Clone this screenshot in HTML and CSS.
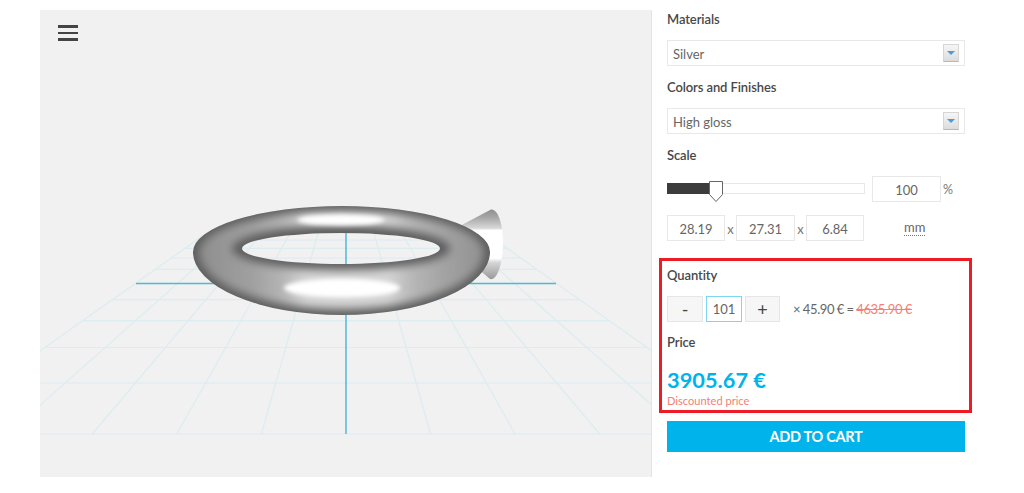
FILE: index.html
```html
<!DOCTYPE html>
<html lang="en">
<head>
<meta charset="utf-8">
<title>3D print configurator</title>
<link rel="stylesheet" href="styles.css">
</head>
<body>
<main class="page">
  <section class="viewer">
    <button class="menu" aria-label="Menu"><span></span><span></span><span></span></button>
    <svg class="scene" viewBox="40 10 611 467" width="611" height="467" aria-hidden="true">
      <defs>
        <clipPath id="ringClip"><path clip-rule="evenodd" d="M193 252A149 46 0 0 1 342 206A148 46 0 0 1 490 252A148 63 0 0 1 342 315A149 63 0 0 1 193 252ZM242 248.500A99 15.500 0 1 0 440 248.500A99 15.500 0 1 0 242 248.500Z"/></clipPath>
        <linearGradient id="tubeGlow" gradientUnits="userSpaceOnUse" x1="193" y1="0" x2="490" y2="0">
          <stop offset="0" stop-color="#8c8c8c"/><stop offset="0.2" stop-color="#a0a0a0"/><stop offset="0.3" stop-color="#b4b4b4"/><stop offset="0.38" stop-color="#d4d4d4"/><stop offset="0.66" stop-color="#d4d4d4"/><stop offset="0.74" stop-color="#b6b6b6"/><stop offset="0.85" stop-color="#a2a2a2"/><stop offset="1" stop-color="#8e8e8e"/>
        </linearGradient>
        <linearGradient id="coneShade" x1="0" y1="0" x2="0" y2="1">
          <stop offset="0" stop-color="#8e8e8e"/><stop offset="0.12" stop-color="#a8a8a8"/><stop offset="0.27" stop-color="#d8d8d8"/><stop offset="0.3" stop-color="#fff"/><stop offset="0.7" stop-color="#fff"/><stop offset="0.76" stop-color="#d6d6d6"/><stop offset="1" stop-color="#999"/>
        </linearGradient>
        <filter id="blurWide" x="-10%" y="-20%" width="120%" height="140%"><feGaussianBlur stdDeviation="4"/></filter>
        <filter id="blurSoft" x="-20%" y="-60%" width="140%" height="220%"><feGaussianBlur stdDeviation="2"/></filter>
      </defs>
      <g class="grid">
        <line x1="40" y1="434" x2="651" y2="434"/><line x1="40" y1="383" x2="651" y2="383"/><line x1="45" y1="347.500" x2="647" y2="347.500"/><line x1="83" y1="320.700" x2="609" y2="320.700"/><line x1="112.500" y1="299.600" x2="579.500" y2="299.600"/><line x1="155" y1="269.400" x2="537" y2="269.400"/><line x1="171" y1="258" x2="521" y2="258"/><line x1="184.500" y1="248.400" x2="507.500" y2="248.400"/><line x1="196.500" y1="240" x2="495.500" y2="240"/><line x1="206.500" y1="233" x2="485.500" y2="233"/>
        <line x1="-77" y1="434" x2="206.500" y2="233"/><line x1="7.600" y1="434" x2="234.400" y2="233"/><line x1="92.200" y1="434" x2="262.300" y2="233"/><line x1="176.800" y1="434" x2="290.200" y2="233"/><line x1="261.400" y1="434" x2="318.100" y2="233"/><line x1="430.600" y1="434" x2="373.900" y2="233"/><line x1="515.200" y1="434" x2="401.800" y2="233"/><line x1="599.800" y1="434" x2="429.700" y2="233"/><line x1="684.400" y1="434" x2="457.600" y2="233"/><line x1="769" y1="434" x2="485.500" y2="233"/>
      </g>
      <g class="axes">
        <line x1="136" y1="283.500" x2="556" y2="283.500"/><line x1="346" y1="233" x2="346" y2="434"/>
      </g>
      <path d="M456 228L491 209.500C497 208 503 222 503 243C503 264 497 281 490 279L470 262Z" fill="url(#coneShade)"/>
      <g clip-path="url(#ringClip)">
        <rect x="190" y="200" width="305" height="120" fill="#5e5e5e"/>
        <path fill-rule="evenodd" fill="url(#tubeGlow)" filter="url(#blurWide)" d="M199 252A143 41 0 0 1 342 211A142 41 0 0 1 484 252A142 57 0 0 1 342 309A143 57 0 0 1 199 252ZM232 249A109 21 0 0 0 450 249A109 24 0 0 0 232 249Z"/>
        <ellipse cx="342" cy="288" rx="58" ry="9.500" fill="#fff" filter="url(#blurSoft)"/>
        <ellipse cx="341" cy="220" rx="44" ry="5.500" fill="#fff" filter="url(#blurSoft)"/>
      </g>
    </svg>
  </section>

  <aside class="panel">
    <h2 class="label">Materials</h2>
    <div class="select"><span class="select-text">Silver</span><i class="arrow"></i></div>
    <h2 class="label">Colors and Finishes</h2>
    <div class="select"><span class="select-text">High gloss</span><i class="arrow"></i></div>
    <h2 class="label">Scale</h2>
    <div class="scale-row">
      <div class="slider"><div class="slider-fill"></div><svg class="thumb" viewBox="0 0 14 21" width="14" height="21" aria-hidden="true"><path d="M.5.5h13v13L7 20.500.5 13.500Z" fill="#fff" stroke="#666"/></svg></div>
      <div class="box box-scale">100</div>
      <span class="unit">%</span>
    </div>
    <div class="dims-row">
      <div class="box box-dim">28.19</div><span class="times">x</span>
      <div class="box box-dim box-mid">27.31</div><span class="times">x</span>
      <div class="box box-dim">6.84</div>
      <span class="mm">mm</span>
    </div>
    <div class="highlight">
      <h2 class="label label-first">Quantity</h2>
      <div class="qty-row">
        <div class="step">-</div>
        <div class="qty">101</div>
        <div class="step step-plus">+</div>
        <p class="sum">× 45.90 € = <s>4635.90 €</s></p>
      </div>
      <h2 class="label label-price">Price</h2>
      <p class="price">3905.67 €</p>
      <p class="discount">Discounted price</p>
    </div>
    <button class="cart">ADD TO CART</button>
  </aside>
</main>
</body>
</html>
```

FILE: styles.css
```css
* { box-sizing: border-box; }
html, body { margin: 0; background: #fff; }
body { font-family: Lato, "Open Sans", sans-serif; color: #555; overflow: hidden; }

.page { display: flex; align-items: flex-start; padding-left: 40px; height: 493px; }

.viewer {
  position: relative;
  flex: none;
  width: 612px;
  height: 467px;
  margin-top: 10px;
  background: #f1f1f1;
  border-right: 1px solid #e4e4e4;
}
.scene { display: block; }
.grid line { stroke: #dcecf1; stroke-width: 1.200; }
.axes line { stroke: #4fb9d3; stroke-width: 1.500; }

.menu {
  position: absolute;
  left: 18px;
  top: 15px;
  display: flex;
  flex-direction: column;
  gap: 4px;
  width: 20px;
  padding: 0;
  border: 0;
  background: none;
}
.menu span { display: block; width: 20px; height: 2.500px; background: #444; }

.panel { flex: none; width: 298px; margin-left: 15px; padding-top: 9px; }

.label {
  height: 20px;
  margin: 0 0 11px;
  font-size: 13px;
  line-height: 20px;
  font-weight: 600;
  letter-spacing: -0.100px;
  color: #484848;
}

.select {
  display: flex;
  align-items: center;
  justify-content: space-between;
  height: 26px;
  margin-bottom: 11px;
  padding: 0 5px;
  border: 1px solid #e8e8e8;
  font-size: 13px;
  color: #666;
}
.select-text { padding-top: 1px; }
.arrow {
  display: flex;
  align-items: center;
  justify-content: center;
  width: 16px;
  height: 18px;
  border: 1px solid #d6d6d6;
  border-bottom-color: #b8b8b8;
  background: linear-gradient(#f6f6f6, #dcdcdc);
}
.arrow::after {
  content: "";
  border-left: 4px solid transparent;
  border-right: 4px solid transparent;
  border-top: 4px solid #4d9ad6;
}

.box {
  display: flex;
  align-items: center;
  justify-content: center;
  height: 26px;
  padding-top: 1px;
  border: 1px solid #e8e8e8;
  font-size: 13px;
  color: #666;
}

.scale-row { display: flex; align-items: center; height: 26px; }
.slider {
  position: relative;
  flex: none;
  width: 198px;
  height: 11px;
  margin-top: -2px;
  border: 1px solid #e8e8e8;
}
.slider-fill { position: absolute; left: -1px; top: -1px; width: 44px; height: 11px; background: #3c3c3c; }
.thumb { position: absolute; left: 41px; top: -3px; }
.box-scale { width: 69px; margin-left: 7px; }
.unit { margin-left: 2px; padding-top: 1px; font-size: 12.500px; color: #777; }

.dims-row { display: flex; align-items: center; height: 26px; margin-top: 13px; }
.box-dim { width: 58px; }
.box-mid { width: 59px; }
.times { width: 11px; padding-top: 1px; text-align: center; font-size: 13px; color: #777; }
.mm { margin-left: 40px; font-size: 13px; line-height: 15px; color: #666; border-bottom: 1px dotted #777; }

.highlight {
  width: 313px;
  height: 155px;
  margin: 17px 0 8px -8px;
  padding: 4px 0 0 5px;
  border: 3px solid #ed1c24;
}
.label-price { margin: 0 0 13px; }

.qty-row { display: flex; align-items: center; height: 26px; margin-bottom: 10px; }
.step {
  display: flex;
  align-items: center;
  justify-content: center;
  width: 36px;
  height: 26px;
  background: #f6f6f6;
  border: 1px solid #e6e6e6;
  font-size: 18px;
  color: #444;
}
.step-plus { width: 35px; margin-left: 3px; }
.qty {
  display: flex;
  align-items: center;
  justify-content: center;
  width: 36px;
  height: 26px;
  margin-left: 3px;
  border: 1px solid #7ed6f2;
  font-size: 13px;
  color: #666;
}
.sum { margin: 0 0 0 13px; font-size: 13px; letter-spacing: -0.330px; word-spacing: -0.500px; color: #666; }
.sum s { color: #f47f74; }

.price {
  height: 30px;
  margin: 0;
  font-size: 21.800px;
  line-height: 30px;
  font-weight: 700;
  color: #00b3ea;
}
.discount { margin: 0; font-size: 11.100px; line-height: 12px; color: #f47f74; }

.cart {
  display: block;
  width: 298px;
  height: 31px;
  padding: 0 0 1px;
  border: 0;
  background: #00b3ea;
  color: #fff;
  font-family: inherit;
  font-size: 14.500px;
  font-weight: 700;
  letter-spacing: -0.300px;
}
```
